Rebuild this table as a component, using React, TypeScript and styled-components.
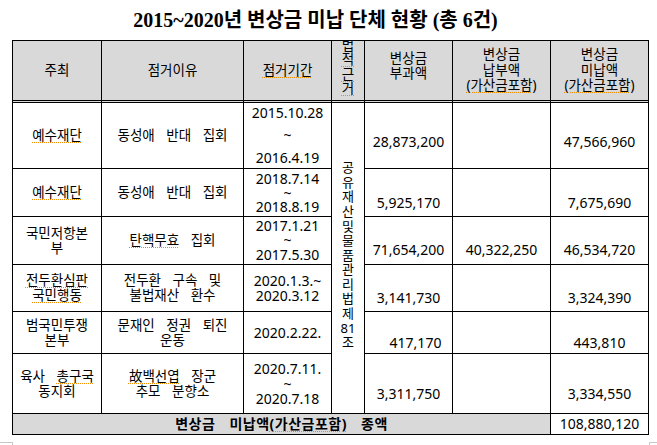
import React from "react";
import styled, { createGlobalStyle } from "styled-components";

const Global = createGlobalStyle`
  html, body { margin: 0; padding: 0; background: #fff; }
  body { font-family: "Noto Sans", "Noto Sans CJK KR", sans-serif; color: #000; }
`;

const Page = styled.div`
  position: relative;
  width: 657px;
  height: 445px;
  overflow: hidden;
  box-sizing: border-box;
  padding-left: 12px;
  display: flex;
  flex-direction: column;
`;

const Title = styled.h1`
  margin: 0;
  height: 40px;
  width: 637px;
  box-sizing: border-box;
  padding: 0 30px 4px 0;
  display: flex;
  align-items: center;
  justify-content: center;
  font-family: "Liberation Serif", "Noto Sans CJK KR", serif;
  font-weight: 700;
  font-size: 20px;
  white-space: pre;
`;

const Grid = styled.div`
  display: grid;
  grid-template-columns: 89px 142px 88px 33px 88px 98px 98px;
  grid-template-rows: 62px 66px 48px 48px 47px 42px 60px 21px;
  width: 637px;
  box-sizing: border-box;
  border-left: 1px solid #000;
  border-top: 1px solid #000;
`;

const BaseCell = styled.div`
  box-sizing: border-box;
  border-right: 1px solid #000;
  border-bottom: 1px solid #000;
  display: flex;
  flex-direction: column;
  align-items: center;
  justify-content: center;
  text-align: center;
  overflow: hidden;
  font-size: 13.5px;
  white-space: pre;
`;

const HeadCell = styled(BaseCell)<{ $pb?: number }>`
  background: #d9d9d9;
  border-bottom: 3px double #000;
  line-height: 15.5px;
  padding-bottom: ${(p) => p.$pb ?? 0}px;
`;

const HeadVertical = styled(HeadCell)`
  line-height: 14.5px;
  padding-bottom: 8px;
`;

const TextCell = styled(BaseCell)`
  line-height: 15px;
  word-spacing: 8px;
`;

const DateCell = styled(BaseCell)`
  font-size: 14px;
`;

const DateLine = styled.div<{ $lh: number }>`
  line-height: ${(p) => p.$lh}px;
`;

const AmountCell = styled(BaseCell)<{ $pb: number; $nudge?: number }>`
  justify-content: flex-end;
  font-size: 14px;
  line-height: 16px;
  padding-bottom: ${(p) => p.$pb}px;
  padding-left: ${(p) => p.$nudge ?? 0}px;
`;

const LawCell = styled(BaseCell)`
  grid-row: 2 / span 6;
  grid-column: 4;
  line-height: 14.6px;
  font-size: 13px;
  padding-bottom: 6px;
`;

const TotalLabel = styled(BaseCell)`
  grid-column: 1 / span 6;
  background: #d9d9d9;
  font-weight: 700;
  font-size: 14px;
  line-height: 20px;
  letter-spacing: 0.5px;
  word-spacing: 10px;
`;

const TotalAmount = styled(BaseCell)`
  font-size: 14px;
  line-height: 20px;
`;

const Marked = styled.span`
  text-decoration-line: underline;
  text-decoration-style: dotted;
  text-decoration-color: #f08a00;
  text-decoration-thickness: 1px;
  text-underline-offset: 2px;
`;

const Corner = styled.div<{ $side: "left" | "right" }>`
  position: absolute;
  bottom: 0;
  ${(p) => (p.$side === "left" ? "left: 0;" : "right: 0;")}
  width: ${(p) => (p.$side === "left" ? 12 : 7)}px;
  height: 2px;
  border-top: 1px solid #c8c8c8;
  ${(p) => (p.$side === "left" ? "border-right: 1px solid #c8c8c8;" : "border-left: 1px solid #c8c8c8;")}
`;

type Row = {
  org: React.ReactNode[];
  reason: React.ReactNode[];
  dates: [string, number][];
  levy: string;
  paid: string;
  unpaid: string;
  pb: number;
  nudge?: number;
};

const rows: Row[] = [
  {
    org: [<Marked>예수재단</Marked>],
    reason: ["동성애 반대 집회"],
    dates: [["2015.10.28", 22.5], ["~", 22.5], ["2016.4.19", 22.5]],
    levy: "28,873,200",
    paid: "",
    unpaid: "47,566,960",
    pb: 18,
  },
  {
    org: [<Marked>예수재단</Marked>],
    reason: ["동성애 반대 집회"],
    dates: [["2018.7.14", 16], ["~", 11], ["2018.8.19", 17]],
    levy: "5,925,170",
    paid: "",
    unpaid: "7,675,690",
    pb: 5,
  },
  {
    org: ["국민저항본", "부"],
    reason: [
      <>
        <Marked>탄핵무효</Marked> 집회
      </>,
    ],
    dates: [["2017.1.21", 16], ["~", 12], ["2017.5.30", 17]],
    levy: "71,654,200",
    paid: "40,322,250",
    unpaid: "46,534,720",
    pb: 6,
  },
  {
    org: [<Marked>전두환심판</Marked>, <Marked>국민행동</Marked>],
    reason: ["전두환 구속 및", "불법재산 환수"],
    dates: [["2020.1.3.~", 15], ["2020.3.12", 15]],
    levy: "3,141,730",
    paid: "",
    unpaid: "3,324,390",
    pb: 5,
  },
  {
    org: ["범국민투쟁", "본부"],
    reason: ["문재인 정권 퇴진", "운동"],
    dates: [["2020.2.22.", 15]],
    levy: "417,170",
    paid: "",
    unpaid: "443,810",
    pb: 2,
    nudge: 14,
  },
  {
    org: [
      <>
        육사 <Marked>총구국</Marked>
      </>,
      "동지회",
    ],
    reason: [
      <>
        <Marked>故백선엽</Marked> 장군
      </>,
      "추모 분향소",
    ],
    dates: [["2020.7.11.", 16], ["~", 13], ["2020.7.18", 17]],
    levy: "3,311,750",
    paid: "",
    unpaid: "3,334,550",
    pb: 11,
  },
];

const lawChars = ["공", "유", "재", "산", "및", "물", "품", "관", "리", "법", "제", "81", "조"];

export default function App() {
  return (
    <>
      <Global />
      <Page>
        <Title>2015~2020년 변상금 미납 단체 현황 (총 6건)</Title>
        <Grid>
          <HeadCell>주최</HeadCell>
          <HeadCell>점거이유</HeadCell>
          <HeadCell>
            <Marked>점거기간</Marked>
          </HeadCell>
          <HeadVertical>
            <div>법</div>
            <div><Marked>적</Marked></div>
            <div><Marked>근</Marked></div>
            <div><Marked>거</Marked></div>
          </HeadVertical>
          <HeadCell $pb={9}>
            <div>변상금</div>
            <div>부과액</div>
          </HeadCell>
          <HeadCell>
            <div>변상금</div>
            <div>납부액</div>
            <div><Marked>(가산금포함)</Marked></div>
          </HeadCell>
          <HeadCell>
            <div>변상금</div>
            <div>미납액</div>
            <div><Marked>(가산금포함)</Marked></div>
          </HeadCell>

          {rows.map((r, i) => (
            <React.Fragment key={i}>
              <TextCell>
                {r.org.map((l, j) => (
                  <div key={j}>{l}</div>
                ))}
              </TextCell>
              <TextCell>
                {r.reason.map((l, j) => (
                  <div key={j}>{l}</div>
                ))}
              </TextCell>
              <DateCell>
                {r.dates.map(([t, lh], j) => (
                  <DateLine key={j} $lh={lh}>{t}</DateLine>
                ))}
              </DateCell>
              {i === 0 && (
                <LawCell>
                  {lawChars.map((c, j) => (
                    <div key={j}>{c}</div>
                  ))}
                </LawCell>
              )}
              <AmountCell $pb={r.pb} $nudge={r.nudge}>{r.levy}</AmountCell>
              <AmountCell $pb={r.pb}>{r.paid}</AmountCell>
              <AmountCell $pb={r.pb}>{r.unpaid}</AmountCell>
            </React.Fragment>
          ))}

          <TotalLabel>
            <span>
              변상금 미납액<Marked>(가산금포함)</Marked> 종액
            </span>
          </TotalLabel>
          <TotalAmount>108,880,120</TotalAmount>
        </Grid>
        <Corner $side="left" />
        <Corner $side="right" />
      </Page>
    </>
  );
}
